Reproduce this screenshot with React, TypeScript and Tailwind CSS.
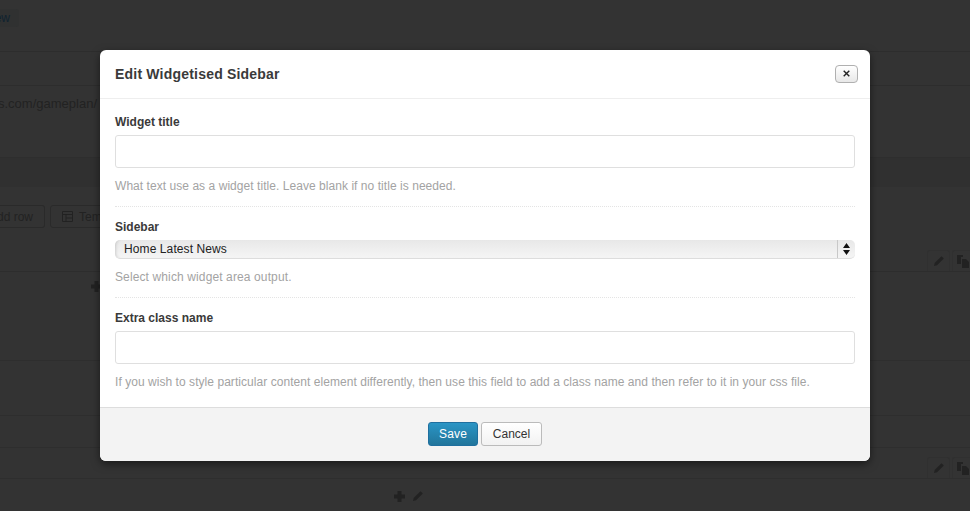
import React from 'react';

const font = { fontFamily: '"Liberation Sans", Arial, sans-serif' };

const CopyGlyph = () => (
  <svg width="14" height="14" viewBox="0 0 14 14" fill="#222">
    <path d="M1 1h6v2H5v7H1z" />
    <path d="M6 5h4l3 3v6H6z" />
  </svg>
);

const PencilGlyph = () => (
  <svg width="12" height="12" viewBox="0 0 12 12" fill="#222">
    <path d="M1 11l.7-3L8.5 1.2l2.3 2.3L4 10.3z" />
  </svg>
);

const PlusGlyph = () => (
  <svg width="11" height="11" viewBox="0 0 11 11" fill="#222">
    <path d="M3.5 0h4v3.5H11v4H7.5V11h-4V7.5H0v-4h3.5z" />
  </svg>
);

const RowTools = () => (
  <div className="flex items-center gap-[2px]">
    <div className="flex h-[21px] w-[23px] items-center justify-center rounded-t-[3px] border border-b-0 border-[#303030]">
      <PencilGlyph />
    </div>
    <div className="flex h-[21px] w-[18px] items-center justify-start rounded-tl-[3px] border-l border-t border-[#303030] pl-[3px]">
      <CopyGlyph />
    </div>
  </div>
);

const Backdrop = () => (
  <div className="h-[511px] w-[970px] overflow-hidden bg-[#333333] text-[#222222]">
    <div className="h-[52px] border-b border-[#2d2d2d] pt-[9px]">
      <div className="flex h-[18px] w-[19px] items-center justify-end rounded-r-[3px] bg-[#303131] pr-[9px] text-[12px] text-[#0f2230]">
        ew
      </div>
    </div>
    <div className="h-[34px] border-b border-[#2d2d2d]" />
    <div className="flex h-[72px] items-start gap-[3px] border-b border-[#2e2e2e] pt-[6px] text-[13px]">
      <span className="ml-[-2px] pt-[2px]">s.com/gameplan/</span>
      <div className="h-[20px] w-[8px] rounded-[3px] border border-[#2a2a2a]" />
    </div>
    <div className="h-[29px] bg-[#303030]" />
    <div className="h-[85px] border-b border-[#2d2d2d] pt-[18px]">
      <div className="flex gap-[5px]">
        <div className="flex h-[23px] w-[45px] items-center justify-end whitespace-nowrap rounded-r-[3px] border border-l-0 border-[#2a2a2a] pr-[11px] text-[12px]">
          dd row
        </div>
        <div className="flex h-[23px] w-[60px] items-center gap-[6px] rounded-[3px] border border-[#2a2a2a] pl-[11px] text-[12px]">
          <svg width="11" height="11" viewBox="0 0 11 11" fill="none" stroke="#222">
            <path d="M.5.5h10v10H.5zM.5 3.5h10M4 3.5v7M4 7h6.5" />
          </svg>
          Tem
        </div>
      </div>
      <div className="mt-[22px] flex justify-end">
        <RowTools />
      </div>
    </div>
    <div className="flex h-[89px] border-b border-[#2e2e2e] pl-[91px] pt-[9px]">
      <PlusGlyph />
    </div>
    <div className="h-[55px] border-b border-[#2e2e2e]" />
    <div className="h-[32px] border-b border-[#2e2e2e]" />
    <div className="flex h-[31px] items-start justify-end border-b border-[#2e2e2e] pt-[9px]">
      <RowTools />
    </div>
    <div className="flex items-center gap-[7px] pl-[394px] pt-[11px]">
      <PlusGlyph />
      <PencilGlyph />
    </div>
  </div>
);

const Field = ({ label, hint }: { label: string; hint: string }) => (
  <div>
    <label className="block h-[15px] text-[12px] font-bold leading-[15px] text-[#3a3a3a]">{label}</label>
    <div className="mt-[5px] h-[33px] rounded-[3px] border border-[#dfdfdf] bg-white" />
    <p className="mt-[11px] text-[12px] leading-[15px] tracking-[0.05px] text-[#a3a3a3]">{hint}</p>
  </div>
);

export default function App() {
  return (
    <div className="relative h-[511px] w-[970px] overflow-hidden" style={font}>
      <Backdrop />
      <div className="absolute left-[100px] top-[50px] flex h-[411px] w-[770px] flex-col overflow-hidden rounded-[6px] bg-white shadow-[0_3px_8px_rgba(0,0,0,0.5)]">
        <div className="flex h-[49px] items-center justify-between border-b border-[#eeeeee] pl-[15px] pr-[12px]">
          <h3 className="text-[14px] font-bold tracking-[0.2px] text-[#3a3a3a]">Edit Widgetised Sidebar</h3>
          <button className="mt-[-1px] flex h-[18px] w-[23px] items-center justify-center rounded-[4px] border border-[#b0b0b0] bg-gradient-to-b from-white to-[#e8e8e8]">
            <svg width="7" height="7" viewBox="0 0 7 7" stroke="#222" strokeWidth="1.4">
              <path d="M.7.7l5.6 5.6M6.3.7L.7 6.3" />
            </svg>
          </button>
        </div>
        <div className="flex-1 px-[15px] pt-[16px]">
          <Field label="Widget title" hint="What text use as a widget title. Leave blank if no title is needed." />
          <div className="mt-[12px] border-t border-dotted border-[#e4e4e4]" />
          <div className="pt-[13px]">
            <label className="block h-[15px] text-[12px] font-bold leading-[15px] text-[#3a3a3a]">Sidebar</label>
            <div className="mt-[5px] flex h-[19px] items-center justify-between rounded-[5px] border-b border-[#dddddd] bg-gradient-to-b from-[#e8e8e8] to-[#f5f5f5] shadow-[inset_3px_0_3px_-2px_rgba(0,0,0,0.15)]">
              <span className="pl-[9px] text-[12px] tracking-[0.1px] text-[#222]">Home Latest News</span>
              <div className="flex h-full w-[18px] items-center justify-center border-l border-[#c8c8c8]">
                <svg width="7" height="12" viewBox="0 0 7 12" fill="#111">
                  <path d="M3.5 0L7 5H0zM0 7h7l-3.5 5z" />
                </svg>
              </div>
            </div>
            <p className="mt-[11px] text-[12px] leading-[15px] tracking-[0.12px] text-[#a3a3a3]">Select which widget area output.</p>
          </div>
          <div className="mt-[12px] border-t border-dotted border-[#e4e4e4]" />
          <div className="pt-[13px]">
            <Field
              label="Extra class name"
              hint="If you wish to style particular content element differently, then use this field to add a class name and then refer to it in your css file."
            />
          </div>
        </div>
        <div className="flex h-[54px] items-center justify-center gap-[3px] border-t border-[#dddddd] bg-[#f3f3f3] pb-[2px]">
          <button className="h-[24px] w-[50px] rounded-[3px] border border-[#1f6f9f] bg-gradient-to-b from-[#2a95c5] to-[#21759b] text-[12px] tracking-[0.2px] text-white">
            Save
          </button>
          <button className="h-[24px] w-[61px] rounded-[3px] border border-[#bbbbbb] bg-gradient-to-b from-white to-[#f2f2f2] text-[12px] text-[#333]">
            Cancel
          </button>
        </div>
      </div>
    </div>
  );
}
